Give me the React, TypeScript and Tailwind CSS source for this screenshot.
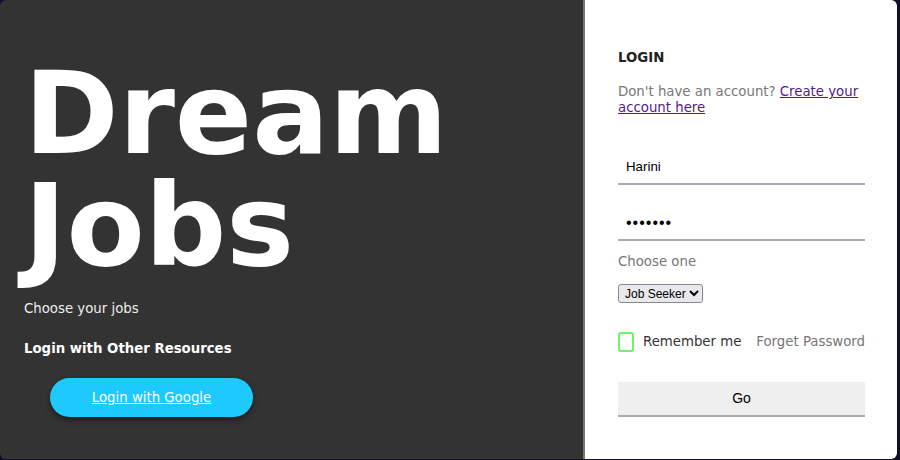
import { useState } from "react";

const GoogleButton = () => (
  <button className="ml-[26px] mt-[20px] h-[39px] w-[203px] rounded-full bg-[#1ec9fd] text-[13.3px] text-white underline shadow-[0_3px_6px_rgba(0,0,0,0.45)]">
    Login with Google
  </button>
);

const LoginForm = () => {
  const [name, setName] = useState("Harini");
  const [password, setPassword] = useState("1234567");
  const [role, setRole] = useState("seeker");

  return (
    <div className="flex flex-col pl-[33px] pr-[32px] pt-[49px]">
      <h2 className="text-[13.3px] font-bold leading-[18px] text-[#222]">LOGIN</h2>
      <p className="mt-[17px] text-[13.3px] leading-[16px] text-[#777]">
        Don't have an account?{" "}
        <a href="#" className="text-[#551a8b] underline">
          Create your account here
        </a>
      </p>
      <input
        value={name}
        onChange={(e) => setName(e.target.value)}
        className="mt-[35px] h-[34px] w-full border-b-2 border-[#aaaab4] px-[8px] pb-[2px] font-['Liberation_Sans',sans-serif] text-[13.3px] text-black outline-none"
      />
      <input
        type="password"
        value={password}
        onChange={(e) => setPassword(e.target.value)}
        className="mt-[22px] h-[34px] w-full border-b-2 border-[#aaaab4] px-[8px] font-['Liberation_Sans',sans-serif] text-[16px] tracking-[1px] text-black outline-none"
      />
      <label className="mt-[12px] text-[13.3px] leading-[18px] text-[#777]">Choose one</label>
      <div className="mt-[13px] flex">
        <select
          value={role}
          onChange={(e) => setRole(e.target.value)}
          className="h-[19px] w-[85px] rounded-[3px] border border-[#888] bg-[#e9e9ed] pl-[2px] font-['Liberation_Sans',sans-serif] text-[12px] text-black"
        >
          <option value="seeker">Job Seeker</option>
          <option value="employer">Employer</option>
        </select>
      </div>
      <div className="mt-[29px] flex h-[20px] items-center justify-between">
        <label className="flex items-center gap-[9px] text-[13.3px] text-[#333]">
          <span className="h-[20px] w-[16px] rounded-[3px] border-2 border-[#6df36d]" />
          Remember me
        </label>
        <a href="#" className="text-[13.3px] text-[#777]">
          Forget Password
        </a>
      </div>
      <button className="mt-[30px] h-[35px] w-full border-b-2 border-[#aaaab4] bg-[#efefef] font-['Liberation_Sans',sans-serif] text-[14px] text-black">
        Go
      </button>
    </div>
  );
};

export default function App() {
  return (
    <div className="h-[460px] w-[900px] overflow-hidden bg-[#10102e] font-['DejaVu_Sans',sans-serif]">
      <div className="flex h-[459px] w-[897px] overflow-hidden rounded-[6px]">
        <div className="flex w-[583px] flex-col bg-[#333333] pl-[24px] pt-[58px]">
          <h1 className="text-[114px] font-bold leading-[112px] text-white">
            Dream
            <br />
            Jobs
          </h1>
          <p className="mt-[18px] text-[13.3px] leading-[18px] text-[#eeeeee]">Choose your jobs</p>
          <h3 className="mt-[22px] text-[13.3px] font-bold leading-[18px] text-white">
            Login with Other Resources
          </h3>
          <GoogleButton />
        </div>
        <div className="w-[2px] bg-[#777]" />
        <div className="flex-1 bg-white">
          <LoginForm />
        </div>
      </div>
    </div>
  );
}
